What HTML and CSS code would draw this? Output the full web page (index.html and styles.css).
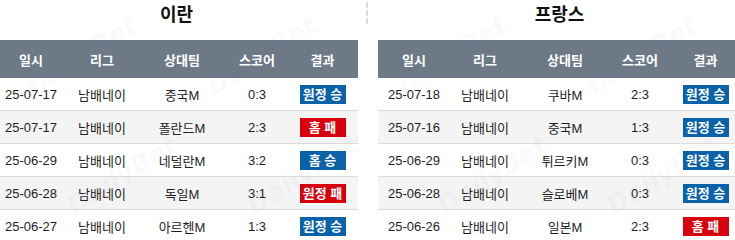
FILE: index.html
```html
<!DOCTYPE html>
<html lang="ko">
<head>
<meta charset="utf-8">
<link rel="stylesheet" href="styles.css">
</head>
<body>
<div class="page">
  <section class="team">
    <h2 class="title">이란</h2>
    <table class="games">
      <colgroup><col class="c1"><col class="c2"><col class="c3"><col class="c4"><col class="c5"></colgroup>
      <thead><tr><th>일시</th><th>리그</th><th>상대팀</th><th>스코어</th><th>결과</th></tr></thead>
      <tbody>
        <tr><td>25-07-17</td><td>남배네이</td><td>중국M</td><td>0:3</td><td><span class="badge win">원정 승</span></td></tr>
        <tr class="alt"><td>25-07-17</td><td>남배네이</td><td>폴란드M</td><td>2:3</td><td><span class="badge lose">홈 패</span></td></tr>
        <tr><td>25-06-29</td><td>남배네이</td><td>네덜란M</td><td>3:2</td><td><span class="badge win">홈 승</span></td></tr>
        <tr class="alt"><td>25-06-28</td><td>남배네이</td><td>독일M</td><td>3:1</td><td><span class="badge lose">원정 패</span></td></tr>
        <tr><td>25-06-27</td><td>남배네이</td><td>아르헨M</td><td>1:3</td><td><span class="badge win">원정 승</span></td></tr>
      </tbody>
    </table>
  </section>
  <div class="divider"></div>
  <section class="team">
    <h2 class="title">프랑스</h2>
    <table class="games">
      <colgroup><col class="c1"><col class="c2"><col class="c3"><col class="c4"><col class="c5"></colgroup>
      <thead><tr><th>일시</th><th>리그</th><th>상대팀</th><th>스코어</th><th>결과</th></tr></thead>
      <tbody>
        <tr><td>25-07-18</td><td>남배네이</td><td>쿠바M</td><td>2:3</td><td><span class="badge win">원정 승</span></td></tr>
        <tr class="alt"><td>25-07-16</td><td>남배네이</td><td>중국M</td><td>1:3</td><td><span class="badge win">원정 승</span></td></tr>
        <tr><td>25-06-29</td><td>남배네이</td><td>튀르키M</td><td>0:3</td><td><span class="badge win">원정 승</span></td></tr>
        <tr class="alt"><td>25-06-28</td><td>남배네이</td><td>슬로베M</td><td>0:3</td><td><span class="badge win">원정 승</span></td></tr>
        <tr><td>25-06-26</td><td>남배네이</td><td>일본M</td><td>2:3</td><td><span class="badge lose">홈 패</span></td></tr>
      </tbody>
    </table>
  </section>
</div>
<div class="watermark" aria-hidden="true">
  <span class="wm w1">DailyBet</span><span class="wm w2">DailyBet</span><span class="wm w3">DailyBet</span><span class="wm w4">DailyBet</span>
  <span class="wm w6">DailyBet</span><span class="wm w7">DailyBet</span><span class="wm w8">DailyBet</span><span class="wm w9">DailyBet</span>
</div>
</body>
</html>
```

FILE: styles.css
```css
html, body {
  margin: 0;
  padding: 0;
  background: #fff;
  overflow: hidden;
}
body {
  font-family: "Liberation Sans", Arial, "Noto Sans CJK KR", sans-serif;
  color: #1e1e1e;
  position: relative;
  width: 735px;
  height: 240px;
}
.page {
  display: flex;
  align-items: flex-start;
  gap: 8px;
  margin-left: -5px;
}
.team {
  width: 363px;
  flex: 0 0 363px;
}
.divider {
  flex: 0 0 2px;
  width: 0;
  height: 22px;
  margin-top: 2px;
  border-left: 2px dashed #dcdcdc;
}
.title {
  margin: 0 0 10px;
  height: 30px;
  line-height: 30px;
  font-size: 18px;
  font-weight: bold;
  text-align: center;
  color: #111;
}
.games {
  width: 363px;
  border-collapse: collapse;
  table-layout: fixed;
  font-size: 13px;
}
.c1 { width: 72px; }
.c2 { width: 70px; }
.c3 { width: 90px; }
.c4 { width: 60px; }
.c5 { width: 71px; }
.games th {
  background: #6d7a86;
  color: #fff;
  font-weight: bold;
  height: 38px;
  padding: 0;
  text-align: center;
}
.games td {
  height: 32px;
  padding: 0;
  text-align: center;
  border-bottom: 1px solid #dcdcdc;
  white-space: nowrap;
}
.games tr.alt td {
  background: #f4f4f4;
}
.badge {
  display: inline-block;
  width: 46px;
  height: 19px;
  line-height: 19px;
  font-size: 13px;
  font-weight: bold;
  color: #fff;
  vertical-align: middle;
}
.badge.win { background: #0a62a8; }
.badge.lose { background: #d8000c; }
.watermark {
  position: absolute;
  inset: 0;
  pointer-events: none;
  overflow: hidden;
}
.wm {
  position: absolute;
  font-family: "DejaVu Sans", sans-serif;
  font-weight: bold;
  font-style: italic;
  font-size: 26px;
  color: rgba(110, 80, 220, 0.05);
  transform: rotate(-32deg);
  white-space: nowrap;
}
.w1 { left: 20px; top: 40px; }
.w2 { left: 200px; top: 40px; }
.w3 { left: 390px; top: 40px; }
.w4 { left: 580px; top: 40px; }
.w6 { left: 60px; top: 160px; }
.w7 { left: 240px; top: 160px; }
.w8 { left: 430px; top: 160px; }
.w9 { left: 600px; top: 160px; }
```
